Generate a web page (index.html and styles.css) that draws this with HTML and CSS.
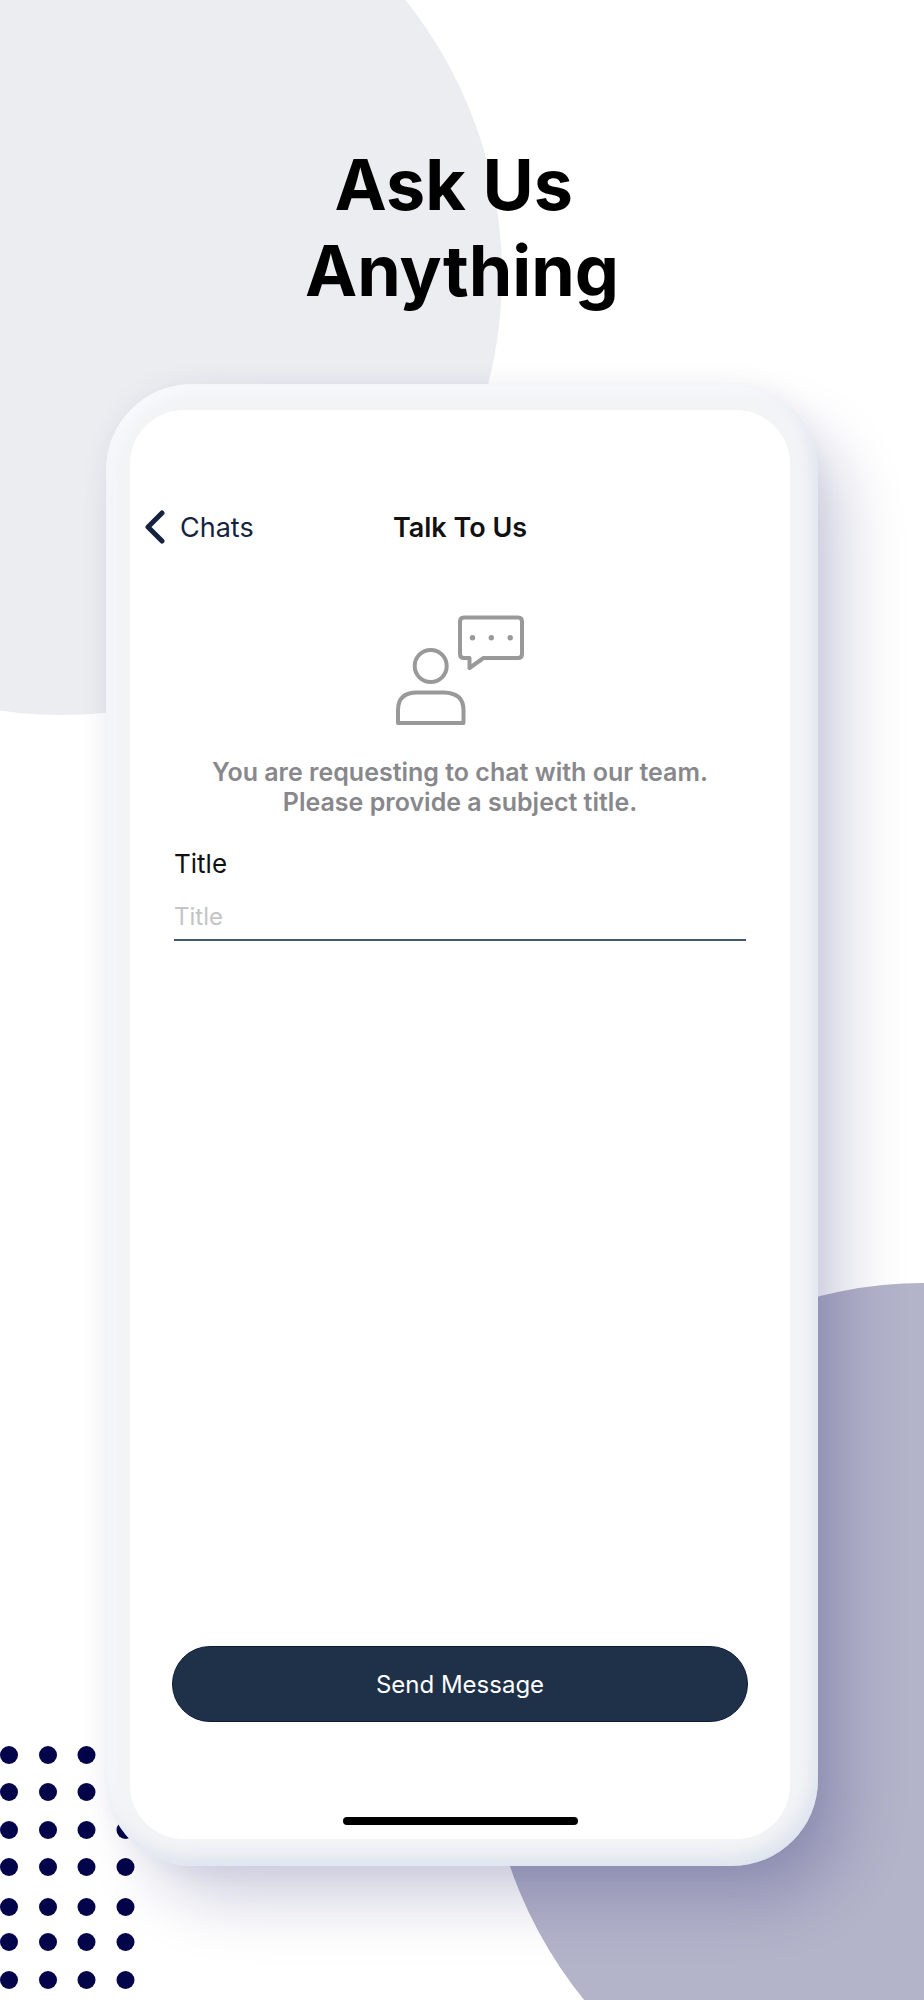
FILE: index.html
```html
<!DOCTYPE html>
<html lang="en">
<head>
  <meta charset="UTF-8" />
  <meta name="viewport" content="width=device-width, initial-scale=1.0"/>
  <title>Ask Us Anything</title>
  <link rel="stylesheet" href="styles.css">
</head>
<body>
  <div class="page">
    <!-- Background shapes -->
    <div class="circle circle-top"></div>
    <div class="circle circle-bottom"></div>
    <svg class="dots" width="135" height="243" viewBox="0 0 135 243" aria-hidden="true">
      <defs>
        <g id="dotRow">
          <circle cx="9" cy="9" r="9"/>
          <circle cx="48" cy="9" r="9"/>
          <circle cx="86.500" cy="9" r="9"/>
          <circle cx="125.500" cy="9" r="9"/>
        </g>
      </defs>
      <use href="#dotRow" y="0"/>
      <use href="#dotRow" y="37"/>
      <use href="#dotRow" y="75"/>
      <use href="#dotRow" y="112"/>
      <use href="#dotRow" y="152"/>
      <use href="#dotRow" y="187"/>
      <use href="#dotRow" y="225"/>
    </svg>

    <h1>Ask Us&nbsp;<br>Anything</h1>

    <!-- Phone -->
    <div class="phone">
      <div class="screen">
        <header class="nav">
          <a class="back" href="#">
            <svg width="20" height="34" viewBox="0 0 20 34" aria-hidden="true">
              <path d="M17 3 L3 17 L17 31"/>
            </svg>
            Chats
          </a>
          <h2>Talk To Us</h2>
        </header>

        <form class="form">
          <svg class="chat-icon" width="130" height="112" viewBox="0 0 130 112" aria-hidden="true">
            <circle cx="35.700" cy="51" r="16"/>
            <path d="M3 108 V95 Q3 77.500 22 77.500 H49 Q68.500 78 68.500 95 V108 Z"/>
            <path d="M69 2.500 H123 Q127 2.500 127 6.500 V39 Q127 43 123 43 H88.500 L74.500 53 V43 H69 Q65 43 65 39 V6.500 Q65 2.500 69 2.500 Z"/>
            <g class="fill">
              <circle cx="77.500" cy="22.700" r="2.700"/>
              <circle cx="96.300" cy="22.700" r="2.700"/>
              <circle cx="115.200" cy="22.700" r="2.700"/>
            </g>
          </svg>
          <p>You are requesting to chat with our team.<br>Please provide a subject title.</p>
          <label for="title">Title</label>
          <input id="title" type="text" placeholder="Title" />
          <button type="button">Send Message</button>
        </form>

        <div class="home-bar"></div>
      </div>
    </div>
  </div>
</body>
</html>
```
FILE: styles.css
```css
* {
  box-sizing: border-box;
}
body {
  margin: 0;
  font-family: Inter, sans-serif;
  background: white;
}
.page {
  position: relative;
  display: flex;
  flex-direction: column;
  min-height: 100vh;
  padding: 142px 106px 134px;
  overflow: hidden;
}

/* background */
.circle {
  position: absolute;
  width: 880px;
  height: 880px;
  border-radius: 50%;
}
.circle-top {
  top: -165px;
  left: -378px;
  background: #ecedf1;
}
.circle-bottom {
  right: -442px;
  bottom: -163px;
  background: #b3b3ca;
}
.dots {
  position: absolute;
  left: 0;
  bottom: 11px;
  fill: #04044a;
}

h1 {
  position: relative;
  margin: 0 0 70px;
  font-size: 70px;
  font-weight: 700;
  line-height: 86px;
  text-align: center;
  color: black;
}

/* phone */
.phone {
  position: relative;
  display: flex;
  flex: 1;
  padding: 26px 28px 27px 24px;
  border-radius: 86px;
  background: #f3f4f6;
  box-shadow:
    32px 40px 66px -8px rgba(4, 4, 90, 0.2),
    0 0 30px rgba(4, 4, 90, 0.05),
    inset -6px -10px 16px rgba(190, 205, 228, 0.4),
    inset 6px 6px 14px rgba(250, 251, 255, 0.8);
}
.screen {
  display: flex;
  flex-direction: column;
  flex: 1;
  padding: 96px 0 14px;
  border-radius: 54px;
  background: white;
}
.nav {
  display: grid;
  grid-template-columns: 1fr auto 1fr;
  align-items: center;
  height: 42px;
  padding: 0 15px;
}
.back {
  display: flex;
  align-items: center;
  gap: 15px;
  font-size: 27px;
  color: #15233f;
  text-decoration: none;
}
.back svg {
  fill: none;
  stroke: #15233f;
  stroke-width: 5;
  stroke-linecap: round;
  stroke-linejoin: round;
}
h2 {
  margin: 0;
  font-size: 27px;
  font-weight: 600;
  color: #111;
}
.form {
  display: flex;
  flex-direction: column;
  flex: 1;
  padding: 67px 42px 0;
}
.chat-icon {
  align-self: center;
  fill: none;
  stroke: #999;
  stroke-width: 4;
  stroke-linejoin: round;
}
.chat-icon .fill {
  fill: #999;
  stroke: none;
}
.form p {
  margin: 30px 0 31px;
  font-size: 25px;
  font-weight: 600;
  line-height: 30px;
  text-align: center;
  color: #88888c;
}
label {
  padding-left: 2px;
  font-size: 26px;
  line-height: 32px;
  color: #111;
}
input {
  height: 61px;
  margin: 0 2px;
  padding: 13px 0 0;
  border: none;
  border-bottom: 2px solid #3f5a74;
  font-family: inherit;
  font-size: 24px;
  background: none;
  outline: none;
}
input::placeholder {
  color: #c4c4c6;
}
button {
  height: 76px;
  margin-top: auto;
  border: 1px solid #0c1a3c;
  border-radius: 38px;
  font-family: inherit;
  font-size: 24px;
  color: white;
  background: #1e3148;
  cursor: pointer;
}
.home-bar {
  align-self: center;
  width: 235px;
  height: 8px;
  margin-top: 95px;
  border-radius: 4px;
  background: black;
}
```
